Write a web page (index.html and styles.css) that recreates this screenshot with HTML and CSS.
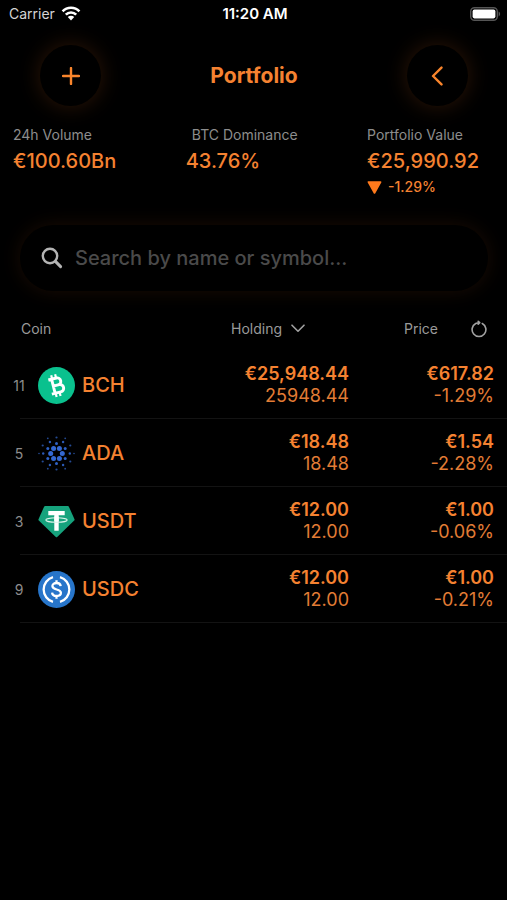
FILE: index.html
```html
<!DOCTYPE html>
<html lang="en">
<head>
<meta charset="utf-8">
<meta name="viewport" content="width=device-width, initial-scale=1">
<title>Portfolio</title>
<link rel="stylesheet" href="styles.css">
</head>
<body>
<div class="status-bar">
  <div class="carrier">
    <span>Carrier</span>
    <svg width="20" height="15" viewBox="0 0 20 15" aria-hidden="true">
      <g fill="none" stroke="#fff" stroke-width="2.6">
        <path d="M1.6 5.4a11.6 11.6 0 0 1 16.8 0"/>
        <path d="M4.8 8.7a7.2 7.2 0 0 1 10.4 0"/>
      </g>
      <path fill="#fff" d="M6.8 11.1a4.5 4.5 0 0 1 6.4 0L10 14.4z"/>
    </svg>
  </div>
  <span class="clock">11:20 AM</span>
  <div class="battery">
    <svg width="31" height="14" viewBox="0 0 31 14" aria-hidden="true">
      <rect x=".7" y=".7" width="26.6" height="12.6" rx="3.8" fill="none" stroke="#555" stroke-width="1.4"/>
      <rect x="2.6" y="2.6" width="22.8" height="8.8" rx="1.8" fill="#fff"/>
      <path d="M28.600 4.6c2 .7 2 4.1 0 4.800z" fill="#555"/>
    </svg>
  </div>
</div>

<header class="top">
  <button class="round" type="button" aria-label="Add">
    <svg width="18" height="18" viewBox="0 0 18 18" aria-hidden="true"><path d="M9 1v16M1 9h16"/></svg>
  </button>
  <h1>Portfolio</h1>
  <button class="round" type="button" aria-label="Back">
    <svg width="20" height="20" viewBox="0 0 20 20" aria-hidden="true"><path d="M13.500 1.600 5 10l8.500 8.400"/></svg>
  </button>
</header>

<main>
  <section class="stats">
    <div class="stat">
      <span class="stat-label">24h Volume</span>
      <span class="stat-value">€100.60Bn</span>
    </div>
    <div class="stat stat-middle">
      <span class="stat-label">BTC Dominance</span>
      <span class="stat-value">43.76%</span>
    </div>
    <div class="stat">
      <span class="stat-label">Portfolio Value</span>
      <span class="stat-value">€25,990.92</span>
      <span class="stat-change">
        <svg width="15" height="13" viewBox="0 0 15 13" aria-hidden="true"><path d="M1.400 1h12.200L7.500 12z" fill="#ff7a1c" stroke="#ff7a1c" stroke-width="1.600" stroke-linejoin="round"/></svg>
        -1.29%
      </span>
    </div>
  </section>

  <label class="search">
    <svg width="22" height="22" viewBox="0 0 22 22" aria-hidden="true"><circle cx="9" cy="9" r="7.200"/><path d="m14.400 14.400 5.200 5.200" stroke-width="3"/></svg>
    <input type="text" aria-label="Search" placeholder="Search by name or symbol...">
  </label>

  <table class="coins">
    <colgroup><col><col class="col-holding"><col class="col-price"></colgroup>
    <thead>
      <tr>
        <th scope="col" class="head-coin">Coin</th>
        <th scope="col" class="head-holding">
          <button type="button" class="head-button">Holding
            <svg width="14" height="9" viewBox="0 0 14 9" aria-hidden="true"><path d="m1 1.200 6 6 6-6"/></svg>
          </button>
        </th>
        <th scope="col" class="head-price">
          <div class="price-head">
            <span>Price</span>
            <button type="button" class="head-button" aria-label="Refresh">
              <svg width="16" height="18" viewBox="0 0 16 18" aria-hidden="true"><path d="M11.300 3.500A6.900 6.900 0 1 1 4.700 3.500Q6.300 2.700 8.200 2.700M7.200 1.300 8.700 2.700 7.200 4.200"/></svg>
            </button>
          </div>
        </th>
      </tr>
    </thead>
    <tbody>
      <tr>
        <td>
          <div class="coin">
            <span class="rank">11</span>
            <svg width="37" height="37" viewBox="0 0 32 32" aria-hidden="true">
              <circle cx="16" cy="16" r="16" fill="#0ac18e"/>
              <g transform="rotate(-14 16 16)" fill="none" stroke="#fff">
                <path d="M13.200 9.600v12.800M10.300 9.700h7.200a3 3 0 0 1 0 6.100h-4.300M17.500 15.800h.8a3.250 3.250 0 0 1 0 6.500h-8" stroke-width="2.500"/>
                <path d="M13.700 6.300v3M17.200 6.300v3M13.700 22.700v3M17.200 22.700v3" stroke-width="1.900"/>
              </g>
            </svg>
            <span class="symbol">BCH</span>
          </div>
        </td>
        <td class="num"><span class="strong">€25,948.44</span><span>25948.44</span></td>
        <td class="num"><span class="strong">€617.82</span><span>-1.29%</span></td>
      </tr>
      <tr>
        <td>
          <div class="coin">
            <span class="rank">5</span>
            <svg width="37" height="37" viewBox="-18.500 -18.500 37 37" aria-hidden="true">
              <g fill="#3468d1">
                <circle cx="5.800" cy="0" r="2.500"/><circle cx="2.900" cy="5" r="2.500"/><circle cx="-2.900" cy="5" r="2.500"/><circle cx="-5.800" cy="0" r="2.500"/><circle cx="-2.900" cy="-5" r="2.500"/><circle cx="2.900" cy="-5" r="2.500"/>
              </g>
              <g fill="#2f62c6">
                <circle cx="8.700" cy="5" r="1.500"/><circle cx="0" cy="10" r="1.500"/><circle cx="-8.700" cy="5" r="1.500"/><circle cx="-8.700" cy="-5" r="1.500"/><circle cx="0" cy="-10" r="1.500"/><circle cx="8.700" cy="-5" r="1.500"/>
              </g>
              <g fill="#2b59b4">
                <circle cx="13.300" cy="0" r="1.200"/><circle cx="6.600" cy="11.500" r="1.200"/><circle cx="-6.600" cy="11.500" r="1.200"/><circle cx="-13.300" cy="0" r="1.200"/><circle cx="-6.600" cy="-11.500" r="1.200"/><circle cx="6.600" cy="-11.500" r="1.200"/>
              </g>
              <g fill="#244a94">
                <circle cx="13.800" cy="8" r="1.100"/><circle cx="0" cy="16" r="1.100"/><circle cx="-13.800" cy="8" r="1.100"/><circle cx="-13.800" cy="-8" r="1.100"/><circle cx="0" cy="-16" r="1.100"/><circle cx="13.800" cy="-8" r="1.100"/>
                <circle cx="17.500" cy="0" r=".8"/><circle cx="8.700" cy="15.200" r=".9"/><circle cx="-8.700" cy="15.200" r=".9"/><circle cx="-17.500" cy="0" r=".8"/><circle cx="-8.700" cy="-15.200" r=".9"/><circle cx="8.700" cy="-15.200" r=".9"/>
              </g>
            </svg>
            <span class="symbol">ADA</span>
          </div>
        </td>
        <td class="num"><span class="strong">€18.48</span><span>18.48</span></td>
        <td class="num"><span class="strong">€1.54</span><span>-2.28%</span></td>
      </tr>
      <tr>
        <td>
          <div class="coin">
            <span class="rank">3</span>
            <svg width="37" height="37" viewBox="0 0 37 37" aria-hidden="true">
              <path d="M7.200 3h22.600q.7 0 1.100.7l5.600 12.500q.3.700-.3 1.300L19.200 33.900q-.7.600-1.400 0L.8 17.500q-.6-.6-.3-1.300L6.100 3.700q.4-.7 1.100-.700z" fill="#16a37d"/>
              <path d="M10.300 8h16.400v4.200h-6v15.500h-4.400V12.200h-6z" fill="#fff"/>
              <ellipse cx="18.500" cy="17" rx="10.700" ry="2.300" fill="none" stroke="#d9f3ea" stroke-width="1.100"/>
              <path d="M16.300 13.500h4.400v4.800h-4.400z" fill="#fff"/>
            </svg>
            <span class="symbol">USDT</span>
          </div>
        </td>
        <td class="num"><span class="strong">€12.00</span><span>12.00</span></td>
        <td class="num"><span class="strong">€1.00</span><span>-0.06%</span></td>
      </tr>
      <tr>
        <td>
          <div class="coin">
            <span class="rank">9</span>
            <svg width="37" height="37" viewBox="0 0 37 37" aria-hidden="true">
              <circle cx="18.500" cy="18.500" r="18.500" fill="#2775ca"/>
              <g fill="none" stroke="#fff" stroke-width="2.300">
                <path d="M15 6.100a12.900 12.900 0 0 0 0 24.800M22 6.100a12.900 12.900 0 0 1 0 24.800"/>
                <path d="M22.700 15.200c-.2-2.100-1.800-3.200-4.100-3.200-2.600 0-4.200 1.200-4.200 3.100 0 4.600 8.500 2.200 8.500 6.700 0 2-1.700 3.200-4.300 3.200-2.600 0-4.300-1.200-4.500-3.400M18.500 9.300v3M18.500 24.700v3"/>
              </g>
            </svg>
            <span class="symbol">USDC</span>
          </div>
        </td>
        <td class="num"><span class="strong">€12.00</span><span>12.00</span></td>
        <td class="num"><span class="strong">€1.00</span><span>-0.21%</span></td>
      </tr>
    </tbody>
  </table>
</main>
</body>
</html>
```

FILE: styles.css
```css
* {
  box-sizing: border-box;
}

body {
  margin: 0;
  min-height: 100vh;
  background: #000;
  color: #f58231;
  font-family: Inter, "Liberation Sans", sans-serif;
}

button,
input {
  margin: 0;
  padding: 0;
  border: 0;
  background: none;
  color: inherit;
  font: inherit;
}

svg {
  display: block;
  flex: none;
}

.status-bar {
  display: grid;
  grid-template-columns: 1fr auto 1fr;
  align-items: center;
  height: 27px;
  padding: 0 6px 0 9px;
  color: #fff;
  font-size: 14px;
}

.carrier {
  display: flex;
  align-items: center;
  gap: 6px;
  color: #d4d4d4;
}

.clock {
  font-size: 15px;
  font-weight: 600;
}

.battery {
  display: flex;
  justify-content: flex-end;
}

.top {
  display: flex;
  align-items: center;
  justify-content: space-between;
  padding: 18px 39px 0 40px;
}

.top h1 {
  margin: 0;
  font-size: 21px;
  font-weight: 700;
}

.round {
  display: flex;
  align-items: center;
  justify-content: center;
  width: 61px;
  height: 61px;
  border-radius: 50%;
  background: #000;
  box-shadow: 0 0 22px rgba(255, 122, 40, 0.18);
}

.round svg {
  fill: none;
  stroke: #f9852c;
  stroke-width: 2.400;
  stroke-linecap: round;
  stroke-linejoin: round;
}

.stats {
  display: flex;
  justify-content: space-between;
  padding: 20px 28px 0 13px;
}

.stat {
  display: flex;
  flex-direction: column;
  min-height: 70px;
}

.stat-middle {
  width: 112px;
}

.stat-middle .stat-label {
  align-self: flex-end;
}

.stat-label {
  color: #8d8d8d;
  font-size: 14px;
  line-height: 18px;
}

.stat-value {
  font-size: 20px;
  font-weight: 500;
  line-height: 34px;
}

.stat-change {
  display: flex;
  align-items: center;
  gap: 6px;
  font-size: 14px;
  font-weight: 500;
  line-height: 18px;
}

.search {
  display: flex;
  align-items: center;
  gap: 12px;
  height: 66px;
  margin: 29px 19px 0 20px;
  padding: 0 21px;
  border-radius: 33px;
  background: #000;
  box-shadow: 0 0 20px rgba(255, 122, 40, 0.1);
}

.search svg {
  fill: none;
  stroke: #b4b4b4;
  stroke-width: 2.400;
  stroke-linecap: round;
}

.search input {
  flex: 1;
  min-width: 0;
  outline: 0;
  font-size: 20px;
  font-weight: 500;
}

.search input::placeholder {
  color: #4a4a4a;
  opacity: 1;
}

.coins {
  width: 100%;
  margin-top: 15px;
  border-spacing: 0;
  table-layout: fixed;
}

.col-holding {
  width: 150px;
}

.col-price {
  width: 158px;
}

.coins th,
.coins td {
  padding: 0;
}

.coins th {
  height: 45px;
  color: #9a9a9a;
  font-size: 14px;
  font-weight: 400;
  text-align: left;
}

.coins .head-coin {
  padding-left: 21px;
}

.coins .head-holding {
  padding-left: 32px;
}

.coins .head-price {
  padding: 0 20px 0 55px;
}

.price-head {
  display: flex;
  align-items: center;
  justify-content: space-between;
}

.head-button {
  display: flex;
  align-items: center;
  gap: 9px;
}

.head-button svg {
  fill: none;
  stroke: #a2a2a2;
  stroke-width: 1.600;
  stroke-linecap: round;
  stroke-linejoin: round;
}

.coins tbody tr {
  background: linear-gradient(#131313, #131313) no-repeat 20px 100% / 100% 1px;
}

.coins td {
  height: 68px;
}

.coin {
  display: flex;
  align-items: center;
}

.rank {
  width: 38px;
  color: #8d8d8d;
  font-size: 14px;
  text-align: center;
}

.symbol {
  margin-left: 7px;
  font-size: 20px;
  font-weight: 500;
}

.num {
  font-size: 18px;
  line-height: 22px;
  text-align: right;
  color: #e27c35;
}

.coins .num:last-child {
  padding-right: 13px;
}

.num span {
  display: block;
}

.num .strong {
  color: #f58231;
  font-weight: 600;
}
```
